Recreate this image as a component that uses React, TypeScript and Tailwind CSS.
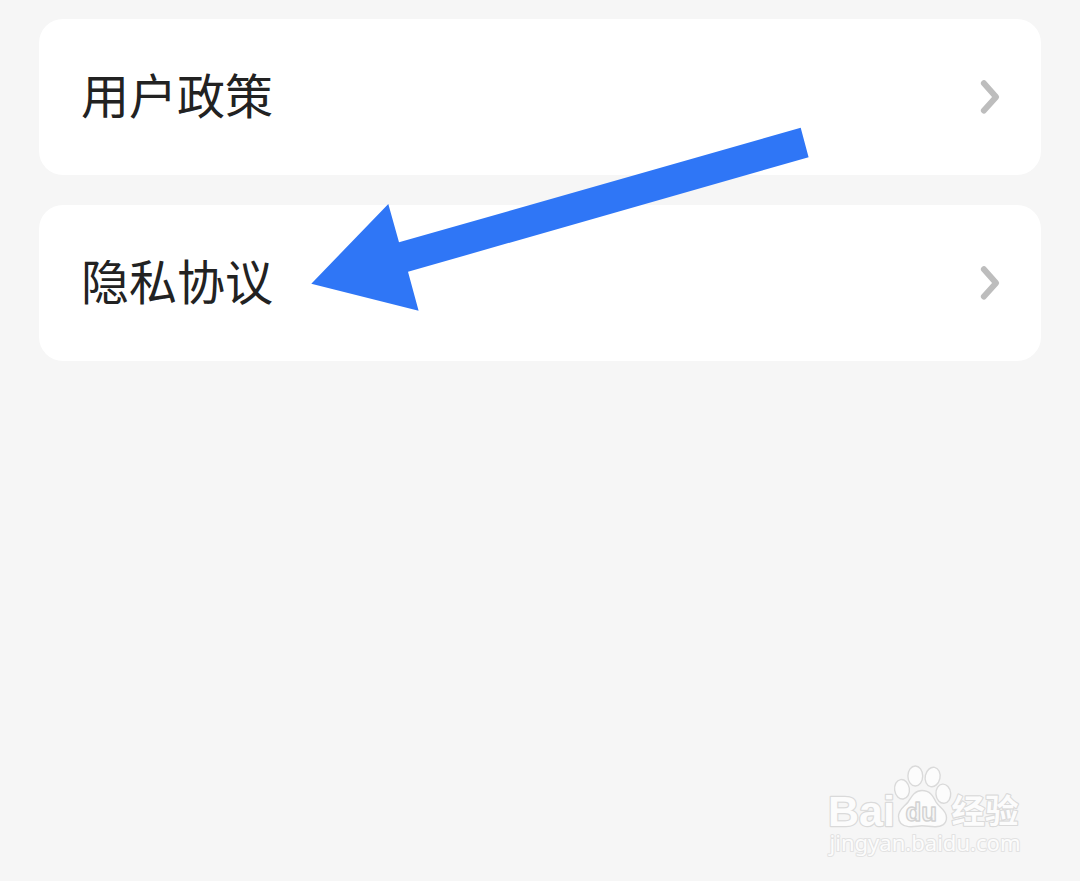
import React from 'react';

const ITEMS = [
  { id: 'policy', label: '用户政策' },
  { id: 'privacy', label: '隐私协议' },
];

function Chevron() {
  return (
    <svg className="w-6 h-10 shrink-0" viewBox="0 0 24 40" fill="none">
      <path
        d="M6.9 6.2 L19.1 20 L6.9 33.6"
        stroke="#bdbdbd"
        strokeWidth="6"
        strokeLinecap="round"
        strokeLinejoin="round"
      />
    </svg>
  );
}

function Arrow() {
  return (
    <svg
      className="absolute left-[311px] top-[127px] w-[498px] h-[184px] pointer-events-none"
      viewBox="311 127 498 184"
    >
      <polygon
        points="311.3,283.7 388.3,204 399,242.3 800.7,127.8 808.6,157.2 408,271.8 418.6,310.7"
        fill="#2f76f6"
      />
    </svg>
  );
}

function Watermark() {
  return (
    <svg
      className="absolute right-[50px] bottom-4 w-[210px] h-[105px] pointer-events-none select-none"
      viewBox="820 760 210 105"
      fill="#fcfcfc"
      stroke="#dadada"
      strokeLinejoin="round"
    >
      <text
        x="828"
        y="825.5"
        fontSize="43"
        strokeWidth="2.4"
        paintOrder="stroke"
        textLength="67"
        lengthAdjust="spacingAndGlyphs"
        className="[font-family:'Liberation_Sans',Arial,sans-serif] font-bold"
      >
        Bai
      </text>

      {/* Paw */}
      <g strokeWidth="1.4">
        <ellipse cx="902" cy="789.3" rx="7.4" ry="9.8" transform="rotate(-8 902 789.3)" />
        <ellipse cx="915.3" cy="776" rx="7.4" ry="10" />
        <ellipse cx="932.6" cy="777" rx="7.4" ry="9.8" transform="rotate(12 932.6 777)" />
        <ellipse cx="943.3" cy="793.7" rx="7.4" ry="9.6" transform="rotate(-5 943.3 793.7)" />
        <path d="M922 790.5 C930 790.5 933 796 936 802 C939 807.5 946.5 809.5 946.5 817.5 C946.5 824.5 941 827 934.5 826.7 C929 826.4 926 825.8 922 825.8 C918 825.8 914 827.2 908.5 826.6 C902 826 898.5 822.5 898.5 816.5 C898.5 809 905 806.5 908.5 801.5 C912 796 915 790.5 922 790.5 Z" />
      </g>
      <text
        x="905.5"
        y="821"
        fontSize="26"
        fill="#f6f6f6"
        stroke="#d2d2d2"
        strokeWidth="1.4"
        textLength="31.5"
        lengthAdjust="spacingAndGlyphs"
        className="[font-family:'Liberation_Sans',Arial,sans-serif] font-bold"
      >
        du
      </text>

      <text
        x="951.5"
        y="822.5"
        fontSize="33"
        strokeWidth="2.2"
        paintOrder="stroke"
        textLength="67"
        lengthAdjust="spacingAndGlyphs"
        className="[font-family:'Noto_Sans_CJK_SC',sans-serif] font-bold"
      >
        经验
      </text>
      <text
        x="829.5"
        y="851"
        fontSize="22"
        stroke="#e2e2e2"
        strokeWidth="2"
        paintOrder="stroke"
        textLength="191"
        lengthAdjust="spacingAndGlyphs"
        className="[font-family:'Noto_Sans',sans-serif]"
      >
        jingyan.baidu.com
      </text>
    </svg>
  );
}

export default function App() {
  return (
    <div className="relative w-full min-h-[881px] bg-[#f6f6f6] overflow-hidden [font-family:'Noto_Sans_CJK_SC',sans-serif]">
      <div className="flex flex-col gap-[30px] px-[39px] pt-[19px]">
        {ITEMS.map((item) => (
          <div
            key={item.id}
            className="flex items-center justify-between h-[156px] pl-[42px] pr-[40px] bg-white rounded-3xl"
          >
            <span className="pb-2 text-[48px] leading-none text-[#222222]">{item.label}</span>
            <Chevron />
          </div>
        ))}
      </div>
      <Arrow />
      <Watermark />
    </div>
  );
}
